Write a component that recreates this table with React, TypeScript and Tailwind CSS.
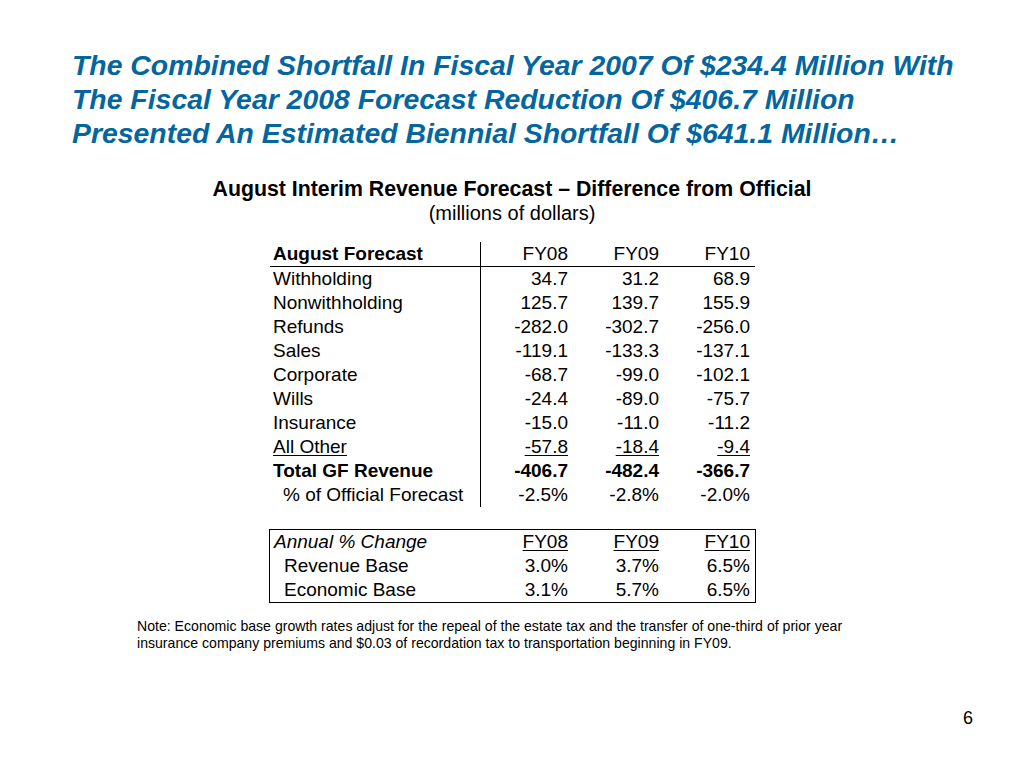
import React from 'react'

const rows = [
  { label: 'Withholding', v: ['34.7', '31.2', '68.9'] },
  { label: 'Nonwithholding', v: ['125.7', '139.7', '155.9'] },
  { label: 'Refunds', v: ['-282.0', '-302.7', '-256.0'] },
  { label: 'Sales', v: ['-119.1', '-133.3', '-137.1'] },
  { label: 'Corporate', v: ['-68.7', '-99.0', '-102.1'] },
  { label: 'Wills', v: ['-24.4', '-89.0', '-75.7'] },
  { label: 'Insurance', v: ['-15.0', '-11.0', '-11.2'] },
  { label: 'All Other', v: ['-57.8', '-18.4', '-9.4'], underline: true },
  { label: 'Total GF Revenue', v: ['-406.7', '-482.4', '-366.7'], bold: true },
  { label: '% of Official Forecast', v: ['-2.5%', '-2.8%', '-2.0%'], indent: true },
]

const changes = [
  { label: 'Revenue Base', v: ['3.0%', '3.7%', '6.5%'] },
  { label: 'Economic Base', v: ['3.1%', '5.7%', '6.5%'] },
]

const grid = 'grid grid-cols-[211px_87px_91px_91px_5px]'

export default function App() {
  return (
    <div className="w-[1024px] h-[768px] bg-white text-black font-['Liberation_Sans',Arial,sans-serif] flex flex-col">
      <h1 className="pt-[48px] pl-[72px] text-[28.4px] leading-[34px] font-bold italic text-[#04669e] whitespace-nowrap">
        The Combined Shortfall In Fiscal Year 2007 Of $234.4 Million With<br />
        The Fiscal Year 2008 Forecast Reduction Of $406.7 Million<br />
        Presented An Estimated Biennial Shortfall Of $641.1 Million…
      </h1>

      <div className="mt-[27px] text-center leading-[24px]">
        <div className="font-bold text-[21.3px]">August Interim Revenue Forecast – Difference from Official</div>
        <div className="text-[20px]">(millions of dollars)</div>
      </div>

      {/* forecast table */}
      <div className="ml-[270px] mt-[17px] w-[485px] text-[19px] leading-[24px]">
        <div className={grid + ' border-b border-black'}>
          <div className="pl-[3px] font-bold border-r border-black">August Forecast</div>
          <div className="text-right">FY08</div>
          <div className="text-right">FY09</div>
          <div className="text-right">FY10</div>
          <div />
        </div>
        {rows.map(r => (
          <div key={r.label} className={grid + (r.bold ? ' font-bold' : '')}>
            <div className={'border-r border-black whitespace-nowrap ' + (r.indent ? 'pl-[13px]' : 'pl-[3px]')}>
              <span className={r.underline ? 'underline underline-offset-2' : ''}>{r.label}</span>
            </div>
            {r.v.map((x, i) => (
              <div key={i} className="text-right">
                <span className={r.underline ? 'underline underline-offset-2' : ''}>{x}</span>
              </div>
            ))}
            <div />
          </div>
        ))}
      </div>

      {/* annual change box */}
      <div className="ml-[269px] mt-[22px] w-[487px] border border-black text-[19px] leading-[24px]">
        <div className={grid}>
          <div className="pl-[4px] italic">Annual % Change</div>
          <div className="text-right"><span className="underline underline-offset-2">FY08</span></div>
          <div className="text-right"><span className="underline underline-offset-2">FY09</span></div>
          <div className="text-right"><span className="underline underline-offset-2">FY10</span></div>
          <div />
        </div>
        {changes.map(r => (
          <div key={r.label} className={grid}>
            <div className="pl-[14px]">{r.label}</div>
            {r.v.map((x, i) => (
              <div key={i} className="text-right">{x}</div>
            ))}
            <div />
          </div>
        ))}
      </div>

      <p className="ml-[137px] mt-[15px] w-[800px] text-[14.1px] leading-[17px] whitespace-nowrap">
        Note: Economic base growth rates adjust for the repeal of the estate tax and the transfer of one-third of prior year<br />
        insurance company premiums and $0.03 of recordation tax to transportation beginning in FY09.
      </p>

      <div className="mt-auto mb-[39px] pr-[51px] text-right text-[18px] leading-[22px]">6</div>
    </div>
  )
}
